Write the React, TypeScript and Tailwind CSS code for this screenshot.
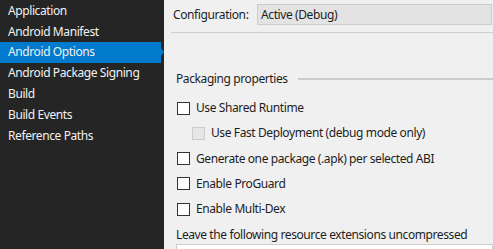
import React from "react";

const items = [
  "Application",
  "Android Manifest",
  "Android Options",
  "Android Package Signing",
  "Build",
  "Build Events",
  "Reference Paths",
];

function Check({ label, disabled, indent }: { label: string; disabled?: boolean; indent?: boolean }) {
  return (
    <div className={`flex items-center h-[25.25px] ${indent ? "pl-[28px]" : "pl-[13px]"}`}>
      <div
        className={`w-[13px] h-[13px] shrink-0 border ${
          disabled ? "border-[#cccccc] bg-[#e6e6e6]" : "border-[#333333] bg-white"
        }`}
      />
      <span className="ml-[6px] whitespace-nowrap">{label}</span>
    </div>
  );
}

export default function App() {
  return (
    <div
      className="flex w-[493px] h-[249px] overflow-hidden text-[12px] tracking-[-0.4px]"
      style={{ fontFamily: '"Segoe UI", "Noto Sans", sans-serif' }}
    >
      <div className="w-[164px] shrink-0 bg-[#252526] text-[#f1f1f1] pt-[0.5px]">
        {items.map((it) => (
          <div
            key={it}
            className={`relative h-[20.8px] flex items-center pl-[8px] whitespace-nowrap ${
              it === "Android Options" ? "bg-[#007acc] w-[161px]" : ""
            }`}
          >
            {it}
            {it === "Android Options" && (
              <div className="absolute right-[-3px] top-1/2 -translate-y-1/2 w-0 h-0 border-y-[4px] border-y-transparent border-l-[3px] border-l-[#007acc]" />
            )}
          </div>
        ))}
      </div>
      <div className="flex-1 bg-[#f0f0f0] text-[#1e1e1e] overflow-hidden">
        <div className="flex items-center h-[28px] pl-[9px] pt-[4px] pb-[3px]">
          <span className="w-[84px]">Configuration:</span>
          <div className="flex-1 h-[21px] bg-[#e3e3e3] border border-[#cccccc] flex items-center pl-[3px] mr-[1px] whitespace-nowrap">
            Active (Debug)
          </div>
        </div>
        <div className="ml-[7px] h-px bg-[#cfcfcf] mt-[4px]" />
        <div className="flex items-center mt-[38px] pl-[12px] h-[16px]">
          <span className="whitespace-nowrap">Packaging properties</span>
          <div className="flex-1 h-[2px] bg-[#cccccc] ml-[10px]" />
        </div>
        <div className="mt-[8.5px]">
          <Check label="Use Shared Runtime" />
          <Check label="Use Fast Deployment (debug mode only)" disabled indent />
          <Check label="Generate one package (.apk) per selected ABI" />
          <Check label="Enable ProGuard" />
          <Check label="Enable Multi-Dex" />
        </div>
        <div className="pl-[12px] mt-[5.5px] h-[16px] flex items-center whitespace-nowrap">
          Leave the following resource extensions uncompressed
        </div>
        <div className="ml-[12px] mt-[1px] h-[22px] bg-white border border-[#cccccc]" />
      </div>
    </div>
  );
}
